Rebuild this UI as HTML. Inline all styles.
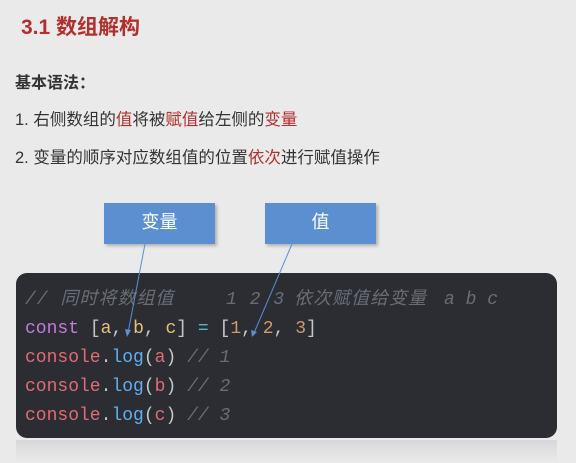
<!DOCTYPE html>
<html><head><meta charset="utf-8"><style>
body{margin:0;width:576px;height:463px;background:#ebeaea;overflow:hidden;position:relative;font-family:"Liberation Sans","Noto Sans CJK SC",sans-serif;color:#333}
.t{position:absolute;left:21px;top:11px;font-size:21px;font-weight:bold;color:#b0302e}
.h{position:absolute;left:15px;top:69px;font-size:16px;font-weight:bold;color:#333}
.l{position:absolute;left:15px;font-size:16.5px;color:#333}
.r{color:#b0302e}
.box{position:absolute;top:203px;width:111px;height:41px;background:#5b8fd0;color:#fff;font-size:18px;text-align:center;line-height:38px;box-shadow:2px 2px 3px rgba(0,0,0,.25)}
.code{position:absolute;left:16px;top:273px;width:541px;height:165px;background:#2b2d33;border-radius:11px;font-family:"Liberation Mono","Noto Sans CJK SC",monospace;font-size:18px}
.ln{position:absolute;left:9px;white-space:pre;line-height:29px}
.c{color:#6a6d74;font-style:italic}
.k{color:#c57bd8}.p{color:#c6c6c6}.v{color:#e5c07b}.n{color:#d19a66}.o{color:#56b6c2}.f{color:#e06c75}.m{color:#61afef}
.refl{position:absolute;left:16px;top:440px;width:541px;height:23px;background:linear-gradient(#d8d8da,#ebeaea)}
</style></head><body>
<div class="t">3.1 数组解构</div>
<div class="h">基本语法：</div>
<div class="l" style="top:106px">1. 右侧数组的<span class="r">值</span>将被<span class="r">赋值</span>给左侧的<span class="r">变量</span></div>
<div class="l" style="top:144px">2. 变量的顺序对应数组值的位置<span class="r">依次</span>进行赋值操作</div>
<div class="box" style="left:104px">变量</div>
<div class="box" style="left:265px">值</div>
<div class="code">
<div class="ln c" style="top:13px;letter-spacing:1px">// 同时将数组值</div>
<div class="ln c" style="top:13px;left:210px;letter-spacing:1px">1 2 3</div>
<div class="ln c" style="top:13px;left:278px;letter-spacing:1px">依次赋值给变量</div>
<div class="ln c" style="top:13px;left:428px">a b c</div>
<div class="ln" style="top:42px"><span class="k">const</span> <span class="p">[</span><span class="v">a</span><span class="p">, </span><span class="v">b</span><span class="p">, </span><span class="v">c</span><span class="p">]</span> <span class="o">=</span> <span class="p">[</span><span class="n">1</span><span class="p">, </span><span class="n">2</span><span class="p">, </span><span class="n">3</span><span class="p">]</span></div>
<div class="ln" style="top:71px"><span class="f">console</span><span class="p">.</span><span class="m">log</span><span class="p">(</span><span class="f">a</span><span class="p">)</span> <span class="c">// 1</span></div>
<div class="ln" style="top:100px"><span class="f">console</span><span class="p">.</span><span class="m">log</span><span class="p">(</span><span class="f">b</span><span class="p">)</span> <span class="c">// 2</span></div>
<div class="ln" style="top:129px"><span class="f">console</span><span class="p">.</span><span class="m">log</span><span class="p">(</span><span class="f">c</span><span class="p">)</span> <span class="c">// 3</span></div>
</div>
<div class="refl"></div>
<svg width="576" height="463" style="position:absolute;left:0;top:0">
<line x1="145" y1="244" x2="128" y2="333" stroke="#5b8fd0" stroke-width="1"/>
<polygon points="125,329 131,330 127,337" fill="#5b8fd0"/>
<line x1="292" y1="244" x2="254" y2="333" stroke="#5b8fd0" stroke-width="1"/>
<polygon points="251,330 257,332 252,337" fill="#5b8fd0"/>
</svg>
</body></html>
